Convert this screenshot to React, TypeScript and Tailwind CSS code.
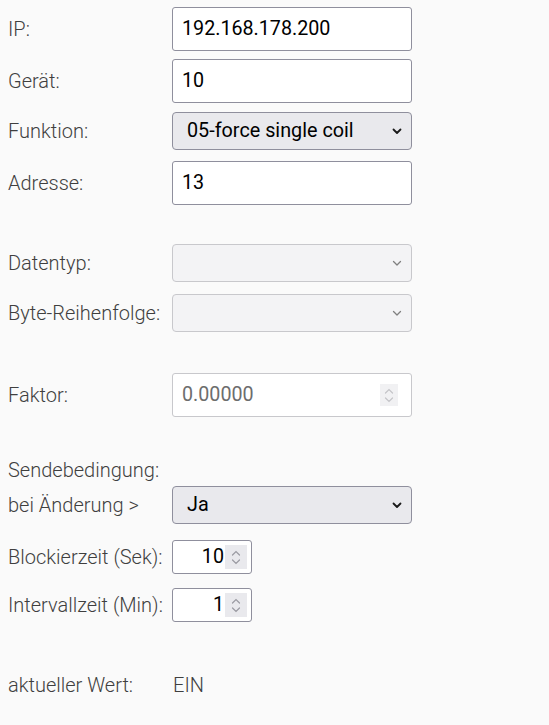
import { ReactNode } from "react";

const font = "font-['Roboto',_'Liberation_Sans',_sans-serif]";
const labelCls = "text-[20px] font-light text-[#3f3f3f] whitespace-nowrap";

function Chevron({ disabled }: { disabled?: boolean }) {
  return (
    <svg width="10" height="7" viewBox="0 0 10 7" className="shrink-0">
      <path
        d="M1.5 1.5 L5 5 L8.5 1.5"
        fill="none"
        stroke={disabled ? "#808080" : "#1a1a1a"}
        strokeWidth={disabled ? 1.3 : 1.8}
        strokeLinecap="round"
        strokeLinejoin="round"
      />
    </svg>
  );
}

function Spinner({ faint }: { faint?: boolean }) {
  return (
    <div
      className={`flex flex-col items-center justify-center gap-[3px] ${
        faint ? "bg-[#f1f1f3] w-[18px] h-[22px]" : "bg-[#e9e9ed] w-[22px] h-[24px]"
      }`}
    >
      <svg width="10" height="6" viewBox="0 0 10 6">
        <path d="M1.5 5 L5 1.5 L8.5 5" fill="none" stroke={faint ? "#c4c4c8" : "#9a9aa2"} strokeWidth="1.2" strokeLinecap="round" />
      </svg>
      <svg width="10" height="6" viewBox="0 0 10 6">
        <path d="M1.5 1 L5 4.5 L8.5 1" fill="none" stroke={faint ? "#c4c4c8" : "#9a9aa2"} strokeWidth="1.2" strokeLinecap="round" />
      </svg>
    </div>
  );
}

function Row({ label, top, children }: { label: string; top: string; children: ReactNode }) {
  return (
    <div className={`flex items-center ${top}`}>
      <div className={`w-[164px] shrink-0 ${labelCls}`}>{label}</div>
      {children}
    </div>
  );
}

function TextBox({ value }: { value: string }) {
  return (
    <div className="w-[240px] h-[44px] border border-[#8f8f9d] rounded-[3px] bg-white flex items-center pl-[9px] text-[19.7px] text-black">
      {value}
    </div>
  );
}

function Select({ value, disabled }: { value?: string; disabled?: boolean }) {
  return (
    <div
      className={`w-[240px] h-[38px] rounded-[4px] border flex items-center justify-between pl-[14px] pr-[9px] text-[19.8px] ${
        disabled ? "border-[#c8c8cc] bg-[#f3f3f5]" : "border-[#8f8f9d] bg-[#e9e9ed] text-black"
      }`}
    >
      <span>{value}</span>
      <Chevron disabled={disabled} />
    </div>
  );
}

function NumberBox({ value }: { value: string }) {
  return (
    <div className="w-[80px] h-[34px] border border-[#8f8f9d] rounded-[3px] bg-white flex items-center justify-end pr-[4px] text-[19.7px] text-black">
      <span className="mr-[1px]">{value}</span>
      <Spinner />
    </div>
  );
}

export default function App() {
  return (
    <div className={`${font} w-[549px] h-[725px] bg-[#fafafa] pl-[8px] flex flex-col`}>
      <Row label="IP:" top="mt-[7px]">
        <TextBox value="192.168.178.200" />
      </Row>
      <Row label="Gerät:" top="mt-[8px]">
        <TextBox value="10" />
      </Row>
      <Row label="Funktion:" top="mt-[9px]">
        <Select value="05-force single coil" />
      </Row>
      <Row label="Adresse:" top="mt-[11px]">
        <TextBox value="13" />
      </Row>

      <Row label="Datentyp:" top="mt-[39px]">
        <Select disabled />
      </Row>
      <Row label="Byte-Reihenfolge:" top="mt-[12px]">
        <Select disabled />
      </Row>

      <Row label="Faktor:" top="mt-[41px]">
        <div className="w-[240px] h-[44px] border border-[#c8c8cc] rounded-[3px] bg-white flex items-center justify-between pl-[9px] pr-[13px] text-[19.7px] text-[#6d6d6d]">
          <span>0.00000</span>
          <Spinner faint />
        </div>
      </Row>

      <div className={`mt-[40px] h-[26px] flex items-center ${labelCls}`}>Sendebedingung:</div>
      <Row label="bei Änderung >" top="mt-[3px]">
        <Select value="Ja" />
      </Row>
      <Row label="Blockierzeit (Sek):" top="mt-[16px]">
        <NumberBox value="10" />
      </Row>
      <Row label="Intervallzeit (Min):" top="mt-[14px]">
        <NumberBox value="1" />
      </Row>

      <div className={`mt-[50px] flex items-center h-[26px] ${labelCls}`}>
        <div className="w-[165px] shrink-0">aktueller Wert:</div>
        <div>EIN</div>
      </div>
    </div>
  );
}
